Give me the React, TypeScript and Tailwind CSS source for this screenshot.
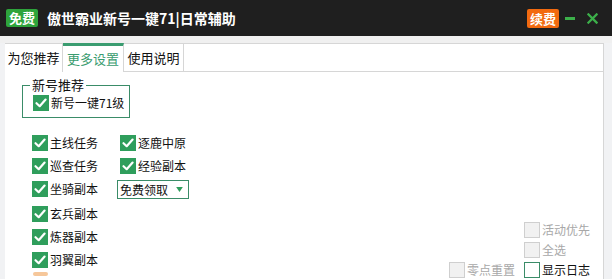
import React from 'react';

const font = { fontFamily: '"Noto Sans CJK SC", "Microsoft YaHei", sans-serif' };

function Check({ on = true }: { on?: boolean }) {
  return (
    <span className={`flex h-4 w-4 shrink-0 items-center justify-center ${on ? 'bg-[#2f9e5c]' : ''}`}>
      {on && (
        <svg viewBox="0 0 16 16" className="h-4 w-4">
          <path d="M3.5 8.2 L6.7 11.2 L12.6 4.6" fill="none" stroke="#fff" strokeWidth="2.2" strokeLinecap="round" strokeLinejoin="round" />
        </svg>
      )}
    </span>
  );
}

function Item({ label, className = '' }: { label: string; className?: string }) {
  return (
    <div className={`flex h-4 items-center gap-[2px] whitespace-nowrap text-[12px] leading-none text-[#111] ${className}`}>
      <Check />
      <span>{label}</span>
    </div>
  );
}

function Off({ label, dark = false }: { label: string; dark?: boolean }) {
  return (
    <div className="flex h-4 items-center gap-[2px] whitespace-nowrap text-[12px] leading-none">
      <span className={`h-4 w-4 shrink-0 border ${dark ? 'border-[#3a8c68] bg-white' : 'border-[#cfcfcf] bg-[#f1f1f1]'}`} />
      <span className={dark ? 'text-[#111]' : 'text-[#a8a8a8]'}>{label}</span>
    </div>
  );
}

export default function App() {
  return (
    <div style={font} className="flex h-[279px] w-[612px] flex-col overflow-hidden bg-[#f1f2f4]">
      <div className="flex h-9 shrink-0 items-center bg-[#1f1f1f] pl-[6px] pr-[14px]">
        <span className="rounded-[2px] bg-[#2ea43c] px-[3px] py-[1px] text-[13px] font-bold leading-4 text-white">免费</span>
        <span className="ml-[9px] whitespace-nowrap text-[14px] font-bold text-white">傲世霸业新号一键71|日常辅助</span>
        <span className="ml-auto rounded-[2px] bg-[#f26a10] px-[3px] py-[1px] text-[13px] font-bold leading-[17px] text-white">续费</span>
        <span className="ml-[6px] h-[3px] w-[10px] bg-[#3cb04a]" />
        <svg viewBox="0 0 12 12" className="ml-[12px] h-[11px] w-[11px]">
          <path d="M1.5 1.5 L10.5 10.5 M10.5 1.5 L1.5 10.5" stroke="#3cb04a" strokeWidth="2.4" strokeLinecap="square" />
        </svg>
      </div>
      <div className="h-[7px] shrink-0 bg-[#f0f0f0]" />
      <div className="ml-[5px] flex w-[599px] flex-1 flex-col border-r border-[#d6d6d6] bg-white">
        <div className="flex h-[29px] shrink-0 text-[13px]">
          <div className="flex w-[58px] items-center justify-center border-r border-t border-[#d6d6d6] bg-white text-[#111]">为您推荐</div>
          <div className="flex w-[61px] items-center justify-center border-r border-t-[3px] border-r-[#d6d6d6] border-t-[#3a9c70] bg-white pb-[1px] text-[#3a9c70]">更多设置</div>
          <div className="flex w-[60px] items-center justify-center border-b border-r border-t border-[#d6d6d6] text-[#111]">使用说明</div>
          <div className="flex-1 border-b border-t border-[#d6d6d6]" />
        </div>
        <div className="relative flex flex-1 pl-[17px] pt-[4px]">
          <div className="flex flex-col">
            <fieldset className="h-[42px] w-[108px] border border-[#3a8c68] pl-[10px]">
              <legend className="ml-[-3px] whitespace-nowrap px-[2px] text-[13px] leading-[18px] text-[#111]">新号推荐</legend>
              <Item label="新号一键71级" className="mt-[1px]" />
            </fieldset>
            <div className="mt-[17px] grid grid-cols-[88px_auto] gap-y-[7px] pl-[10px]">
              <Item label="主线任务" />
              <Item label="逐鹿中原" />
              <Item label="巡查任务" />
              <Item label="经验副本" />
              <Item label="坐骑副本" />
              <div className="-ml-[3px] -mt-[1px] flex h-[19px] w-[72px] items-center whitespace-nowrap border border-[#3a8c68] pl-[2px] text-[12px] text-[#111]">
                免费领取
                <svg viewBox="0 0 8 6" className="ml-auto mr-[5px] h-[5px] w-[7px]">
                  <path d="M0 0 H8 L4 6 Z" fill="#2f9e5c" />
                </svg>
              </div>
              <Item label="玄兵副本" className="col-start-1" />
              <Item label="炼器副本" className="col-start-1" />
              <Item label="羽翼副本" className="col-start-1" />
            </div>
            <div className="ml-[11px] mt-[4px] h-[4px] w-[15px] rounded-full bg-[#f6c79a]" />
          </div>
          <div className="ml-auto mr-[9px] flex flex-col items-end justify-end gap-y-[4px] pb-[1px]">
            <div className="flex w-[70px]"><Off label="活动优先" /></div>
            <div className="flex w-[70px]"><Off label="全选" /></div>
            <div className="flex gap-[7px]">
              <div className="flex w-[68px]"><Off label="零点重置" /></div>
              <div className="flex w-[70px]"><Off label="显示日志" dark /></div>
            </div>
          </div>
        </div>
      </div>
    </div>
  );
}
